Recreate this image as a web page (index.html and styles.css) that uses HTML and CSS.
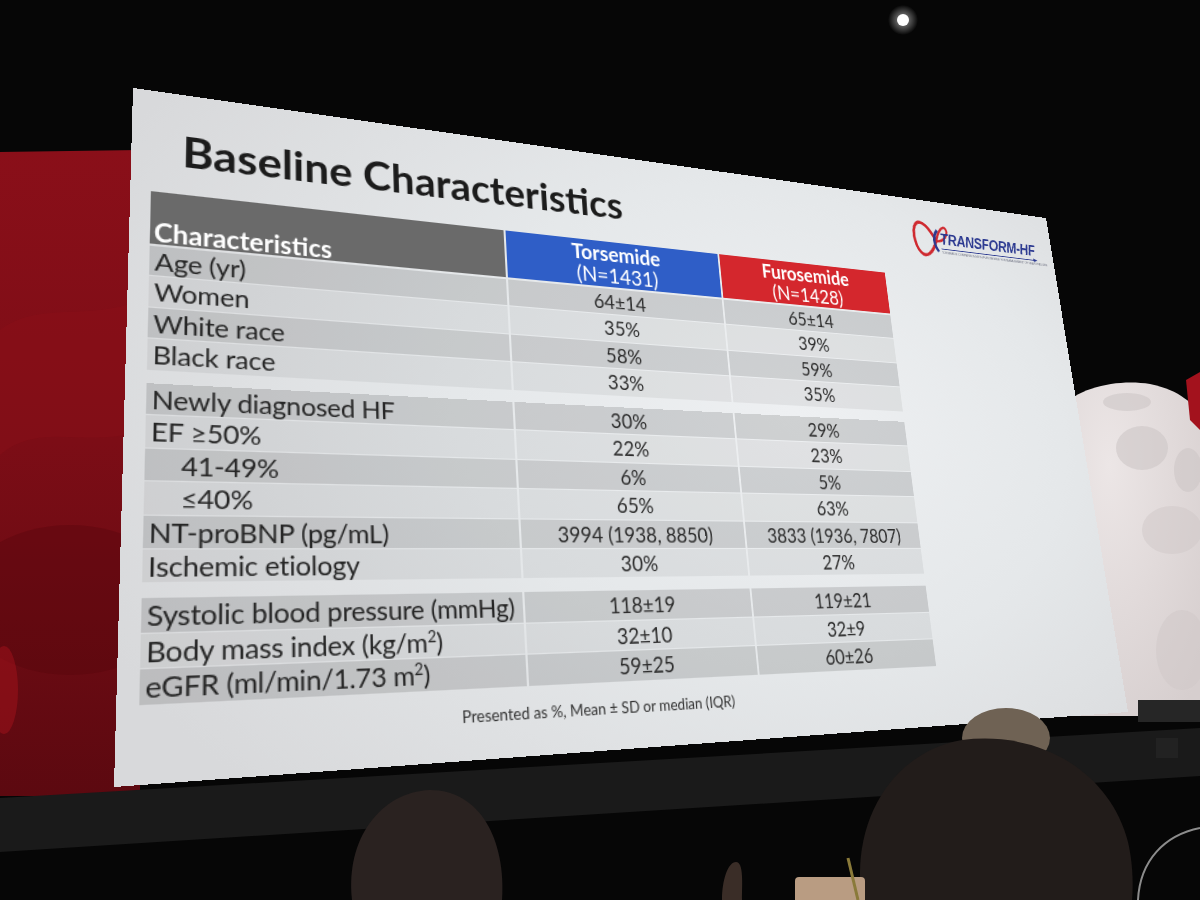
FILE: index.html
```html
<!DOCTYPE html>
<html lang="en">
<head>
<meta charset="utf-8">
<title>Baseline Characteristics – TRANSFORM-HF</title>
<link rel="stylesheet" href="styles.css">
</head>
<body>
<div class="scene">
  <svg class="backdrop" width="1200" height="900" viewBox="0 0 1200 900" aria-hidden="true">
    <defs>
      <linearGradient id="redg" x1="0" y1="0" x2="0" y2="1">
        <stop offset="0" stop-color="#8a0f19"/>
        <stop offset="0.45" stop-color="#7c0d16"/>
        <stop offset="1" stop-color="#5c0910"/>
      </linearGradient>
      <radialGradient id="glow">
        <stop offset="0" stop-color="#ffffff"/>
        <stop offset="0.35" stop-color="#ffffff" stop-opacity="0.7"/>
        <stop offset="1" stop-color="#ffffff" stop-opacity="0"/>
      </radialGradient>
      <radialGradient id="domeg" cx="0.35" cy="0.25" r="0.9">
        <stop offset="0" stop-color="#ece6e6"/>
        <stop offset="1" stop-color="#d6cece"/>
      </radialGradient>
    </defs>
    <rect width="1200" height="900" fill="#060606"/>
    <path d="M0 152 L140 150 L140 796 L0 796 Z" fill="url(#redg)"/>
    <path d="M0 330 C40 300 90 322 140 300 L140 430 C90 450 40 420 0 455 Z" fill="#97131d" opacity="0.22"/>
    <ellipse cx="70" cy="600" rx="110" ry="75" fill="#52070c" opacity="0.35"/>
    <ellipse cx="4" cy="690" rx="14" ry="44" fill="#b3131f" opacity="0.4"/>
    <path d="M1060 408 C1080 386 1120 379 1150 384 C1180 390 1195 405 1200 416 L1200 716 L1076 716 Z" fill="url(#domeg)"/>
    <ellipse cx="1127" cy="402" rx="24" ry="9" fill="#cdc6c6" opacity="0.6"/>
    <ellipse cx="1142" cy="448" rx="26" ry="22" fill="#cdc6c6" opacity="0.6"/>
    <ellipse cx="1188" cy="470" rx="14" ry="22" fill="#cdc6c6" opacity="0.6"/>
    <ellipse cx="1172" cy="530" rx="30" ry="24" fill="#cfc8c8" opacity="0.5"/>
    <ellipse cx="1182" cy="650" rx="26" ry="40" fill="#cfc8c8" opacity="0.5"/>
    <path d="M1186 380 L1200 372 L1200 430 L1190 420 Z" fill="#a3121d"/>
    <polygon points="0,798 1200,728 1200,776 0,852" fill="#1a1a1a"/>
    <rect x="1138" y="700" width="62" height="22" fill="#262626"/>
    <rect x="1156" y="738" width="22" height="20" fill="#222222"/>
    <circle cx="903" cy="20" r="15" fill="url(#glow)" opacity="0.55"/>
    <circle cx="903" cy="20" r="6" fill="#ffffff"/>
  </svg>

  <div class="slide">
    <div class="slide-head">
      <h1 class="title">Baseline Characteristics</h1>
      <div class="logo">
        <svg class="logo-mark" width="52" height="48" viewBox="0 0 52 48" aria-hidden="true">
          <path d="M33 25 C25 9 16 2 9 6 C1 12 2 32 10 40 C17 47 27 39 33 25" fill="none" stroke="#cf2a30" stroke-width="3.6"/>
          <path d="M33 25 C37 13 44 5 48 9 C52 15 44 25 33 25" fill="none" stroke="#cf2a30" stroke-width="2.8"/>
          <path d="M36 12 C29 19 29 30 35 37" fill="none" stroke="#2b3990" stroke-width="3.4"/>
        </svg>
        <div class="logo-text">
          <span class="logo-name">TRANSFORM-HF</span>
          <svg class="logo-arrow" width="138" height="5" viewBox="0 0 138 5" aria-hidden="true">
            <path d="M0 2.5 H133" stroke="#2b3990" stroke-width="1.2"/>
            <path d="M132 0.5 L138 2.5 L132 4.5 Z" fill="#2b3990"/>
          </svg>
          <span class="logo-tag">TORSEMIDE COMPARISON WITH FUROSEMIDE FOR MANAGEMENT OF HEART FAILURE</span>
        </div>
      </div>
    </div>

    <div class="table">
      <div class="row row-head">
        <div class="cell h-label">Characteristics</div>
        <div class="cell h-group h-torse"><span class="h-name">Torsemide</span><span class="h-n">(N=1431)</span></div>
        <div class="cell h-group h-furo"><span class="h-name">Furosemide</span><span class="h-n">(N=1428)</span></div>
      </div>

      <div class="group group-first">
        <div class="row row-dark"><div class="cell label">Age (yr)</div><div class="cell val">64±14</div><div class="cell val">65±14</div></div>
        <div class="row row-light"><div class="cell label">Women</div><div class="cell val">35%</div><div class="cell val">39%</div></div>
        <div class="row row-dark"><div class="cell label">White race</div><div class="cell val">58%</div><div class="cell val">59%</div></div>
        <div class="row row-light"><div class="cell label">Black race</div><div class="cell val">33%</div><div class="cell val">35%</div></div>
      </div>

      <div class="group">
        <div class="row row-dark"><div class="cell label">Newly diagnosed HF</div><div class="cell val">30%</div><div class="cell val">29%</div></div>
        <div class="row row-light"><div class="cell label">EF ≥50%</div><div class="cell val">22%</div><div class="cell val">23%</div></div>
        <div class="row row-dark"><div class="cell label label-sub">41-49%</div><div class="cell val">6%</div><div class="cell val">5%</div></div>
        <div class="row row-light"><div class="cell label label-sub">≤40%</div><div class="cell val">65%</div><div class="cell val">63%</div></div>
        <div class="row row-dark"><div class="cell label">NT-proBNP (pg/mL)</div><div class="cell val">3994 (1938, 8850)</div><div class="cell val">3833 (1936, 7807)</div></div>
        <div class="row row-light"><div class="cell label">Ischemic etiology</div><div class="cell val">30%</div><div class="cell val">27%</div></div>
      </div>

      <div class="group group-last">
        <div class="row row-dark"><div class="cell label">Systolic blood pressure (mmHg)</div><div class="cell val">118±19</div><div class="cell val">119±21</div></div>
        <div class="row row-light"><div class="cell label">Body mass index (kg/m<sup class="sup">2</sup>)</div><div class="cell val">32±10</div><div class="cell val">32±9</div></div>
        <div class="row row-dark"><div class="cell label">eGFR (ml/min/1.73 m<sup class="sup">2</sup>)</div><div class="cell val">59±25</div><div class="cell val">60±26</div></div>
      </div>
    </div>

    <p class="note">Presented as %, Mean ± SD or median (IQR)</p>
  </div>

  <svg class="crowd" width="1200" height="900" viewBox="0 0 1200 900" aria-hidden="true">
    <path d="M352 900 C345 840 380 792 430 790 C480 790 506 840 502 900 Z" fill="#2a2220"/>
    <ellipse cx="1006" cy="738" rx="44" ry="30" fill="#6f6254"/>
    <path d="M862 900 C850 822 892 752 962 740 C1040 730 1110 772 1128 842 C1135 872 1132 900 1132 900 Z" fill="#221c1a"/>
    <rect x="795" y="877" width="70" height="30" rx="4" fill="#b99c82"/>
    <path d="M848 858 L858 900" stroke="#8a7a3a" stroke-width="3"/>
    <path d="M722 900 C722 880 728 862 736 862 C744 862 742 885 742 900 Z" fill="#3a2d27"/>
    <path d="M1138 900 C1140 860 1165 835 1200 828" stroke="#8c8c8c" stroke-width="2" fill="none"/>
  </svg>
</div>
</body>
</html>
```

FILE: styles.css
```css
* {
  box-sizing: border-box;
  margin: 0;
  padding: 0;
}

body {
  background: #050505;
  font-family: Lato, "Open Sans", "DejaVu Sans", sans-serif;
}

.scene {
  position: relative;
  width: 1200px;
  height: 900px;
  overflow: hidden;
}

.backdrop,
.crowd {
  position: absolute;
  left: 0;
  top: 0;
  display: block;
}

/* flat 1000x560 slide, projected onto the photographed screen */
.slide {
  position: absolute;
  left: 0;
  top: 0;
  width: 1000px;
  height: 560px;
  transform-origin: 0 0;
  transform: matrix3d(1.326177, 0.216112, 0, 0.000395007,
                      -0.0607089, 1.063341, 0, -0.000234909,
                      0, 0, 1, 0,
                      133, 88, 0, 1);
  background: radial-gradient(ellipse 70% 85% at 62% 45%, #eef0f2 0%, #e5e8ea 50%, #d8d9db 100%);
  color: #222;
}

.slide-head {
  display: flex;
  align-items: flex-start;
  height: 91px;
  padding: 22px 24px 0 40px;
}

.title {
  margin-top: 10px;
  font-family: Lato, sans-serif;
  font-weight: 700;
  font-size: 38.6px;
  line-height: 38px;
  color: #1c1c1c;
}

.logo {
  margin-left: auto;
  display: flex;
  width: 177px;
  height: 48px;
}

.logo-mark {
  flex: none;
  display: block;
}

.logo-text {
  display: flex;
  flex-direction: column;
  margin-left: -13px;
  padding-top: 13px;
}

.logo-name {
  font-family: "Liberation Sans", Arial, sans-serif;
  font-style: italic;
  font-weight: 700;
  font-size: 17.5px;
  line-height: 18px;
  letter-spacing: -0.4px;
  color: #2b3990;
  white-space: nowrap;
}

.logo-arrow {
  display: block;
}

.logo-tag {
  font-family: "Liberation Sans", Arial, sans-serif;
  font-size: 3.6px;
  line-height: 4px;
  color: #6d7080;
  white-space: nowrap;
}

.table {
  margin-left: 16px;
  width: 740px;
}

.row {
  display: grid;
  grid-template-columns: 308px 225px 203px;
  column-gap: 2px;
  height: 25.4px;
  margin-top: 1px;
}

.row-head {
  height: 46px;
  margin-top: 0;
}

.group {
  margin-top: 11.5px;
}

.group-first {
  margin-top: 2px;
}

.group-last {
  margin-top: 12px;
}

.row-dark .cell {
  background: rgba(0, 0, 0, 0.13);
}

.row-light .cell {
  background: rgba(0, 0, 0, 0.055);
}

.label {
  font-size: 22px;
  line-height: 25.4px;
  padding-left: 4px;
  color: #262626;
  letter-spacing: -0.2px;
  white-space: nowrap;
}

.label-sub {
  padding-left: 27px;
}

.sup {
  font-size: 13px;
  line-height: 0;
  vertical-align: 8px;
}

.val {
  font-size: 19px;
  line-height: 25.4px;
  text-align: center;
  color: #2c2c2c;
  white-space: nowrap;
}

.h-label {
  display: flex;
  align-items: flex-end;
  padding-left: 3px;
  background: #6a6a6a;
  color: #ffffff;
  font-weight: 700;
  font-size: 22px;
  line-height: 20px;
}

.h-group {
  color: #ffffff;
  text-align: center;
  font-size: 20.5px;
  line-height: 22px;
  padding-top: 1px;
}

.h-torse {
  background: #2f5ec7;
}

.h-furo {
  background: #d4272d;
}

.h-name {
  display: block;
  font-weight: 700;
}

.h-n {
  display: block;
}

.note {
  width: 740px;
  margin: 15px 0 0 16px;
  padding-left: 18px;
  text-align: center;
  font-size: 13.5px;
  line-height: 15px;
  color: #333;
}
```
